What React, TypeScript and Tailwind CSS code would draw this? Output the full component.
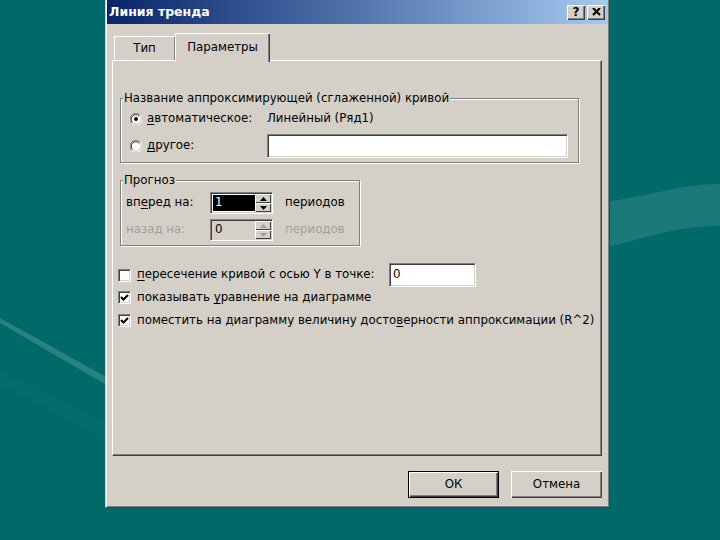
import React from 'react';

const font = 'font-["DejaVu_Sans",Tahoma,sans-serif]';

function Radio({ checked }: { checked?: boolean }) {
  return (
    <svg width="12" height="12" viewBox="0 0 12 12" className="shrink-0">
      <path d="M10.5 2.5 A6 6 0 0 0 1.5 10.5" fill="none" stroke="#808080" strokeWidth="1" />
      <path d="M1.5 10.5 A6 6 0 0 0 10.5 1.5" fill="none" stroke="#ffffff" strokeWidth="1" />
      <circle cx="6" cy="6" r="4.5" fill="#ffffff" stroke="none" />
      <path d="M9 3 A4.5 4.5 0 0 0 2.6 9.4" fill="none" stroke="#404040" strokeWidth="1" />
      {checked && <circle cx="6" cy="6" r="2" fill="#000" />}
    </svg>
  );
}

function Check({ checked }: { checked?: boolean }) {
  return (
    <span className="flex h-[13px] w-[13px] shrink-0 items-center justify-center border border-t-[#808080] border-l-[#808080] border-b-white border-r-white bg-white shadow-[inset_1px_1px_0_#404040,inset_-1px_-1px_0_#d4d0c8]">
      {checked && (
        <svg width="9" height="9" viewBox="0 0 9 9">
          <path d="M1 4 L3.5 6.5 L8 2" fill="none" stroke="#000" strokeWidth="2" />
        </svg>
      )}
    </span>
  );
}

function Spin({ value, disabled }: { value: string; disabled?: boolean }) {
  const tri = disabled ? '#a0a0a0' : '#000';
  return (
    <div
      className={`flex h-[22px] w-[63px] border border-t-[#808080] border-l-[#808080] border-b-white border-r-white shadow-[inset_1px_1px_0_#404040,inset_-1px_-1px_0_#d4d0c8] ${
        disabled ? 'bg-[#d4d0c8]' : 'bg-white'
      }`}
    >
      <div className="flex flex-1 items-center py-[2px] pl-[2px]">
        {disabled ? (
          <span className="pl-[2px] text-black">{value}</span>
        ) : (
          <span className="flex h-full w-full items-center bg-black pl-[2px] text-white">{value}</span>
        )}
      </div>
      <div className="flex w-[17px] flex-col py-[1px] pr-[1px]">
        <div className="flex flex-1 items-center justify-center bg-[#d4d0c8] shadow-[inset_1px_1px_0_#fff,inset_-1px_-1px_0_#404040]">
          <svg width="7" height="4" viewBox="0 0 7 4">
            <path d="M3.5 0 L7 4 L0 4 Z" fill={tri} />
          </svg>
        </div>
        <div className="flex flex-1 items-center justify-center bg-[#d4d0c8] shadow-[inset_1px_1px_0_#fff,inset_-1px_-1px_0_#404040]">
          <svg width="7" height="4" viewBox="0 0 7 4">
            <path d="M0 0 L7 0 L3.5 4 Z" fill={tri} />
          </svg>
        </div>
      </div>
    </div>
  );
}

function Button({ label, primary }: { label: string; primary?: boolean }) {
  return (
    <button
      className={`flex h-[27px] w-[91px] items-center justify-center bg-[#d4d0c8] text-black ${
        primary
          ? 'border border-black shadow-[inset_1px_1px_0_#fff,inset_-1px_-1px_0_#404040,inset_-2px_-2px_0_#808080]'
          : 'shadow-[inset_1px_1px_0_#fff,inset_-1px_-1px_0_#404040,inset_-2px_-2px_0_#808080]'
      }`}
    >
      {label}
    </button>
  );
}

function TitleButton({ children }: { children: React.ReactNode }) {
  return (
    <span className="flex h-[15px] w-[18px] items-center justify-center bg-[#d4d0c8] text-[12px] font-bold leading-none text-black shadow-[inset_1px_1px_0_#fff,inset_-1px_-1px_0_#404040,inset_-2px_-2px_0_#808080]">
      {children}
    </span>
  );
}

export default function App() {
  return (
    <div className={`relative h-[540px] w-[720px] overflow-hidden whitespace-nowrap bg-[#006a6a] text-[11.8px] ${font}`}>
      {/* desktop waves */}
      <svg className="absolute inset-0" width="720" height="540" viewBox="0 0 720 540">
        <path d="M0 318 L110 379 L110 387 L0 323 Z" fill="#3a8c8a" opacity="0.7" />
        <path d="M0 372 L110 424 L110 440 L0 384 Z" fill="#0b7271" opacity="0.4" />
        <path d="M605 202 C650 196 680 184 720 184 L720 226 C680 226 650 236 605 248 Z" fill="#1b7a78" />
      </svg>

      {/* dialog window */}
      <div className="relative ml-[105px] flex h-[508px] w-[505px] flex-col border-l border-r border-b border-l-[#d4d0c8] border-r-[#404040] border-b-[#404040] bg-[#d4d0c8] shadow-[inset_1px_0_0_#fff,inset_-1px_-1px_0_#808080]">
        {/* title bar */}
        <div className="mx-[1px] flex h-[24px] items-center justify-between bg-gradient-to-r from-[#0a246a] to-[#a6caf0] pl-[2px] pr-[3px]">
          <span className="text-[12.5px] font-bold text-white">Линия тренда</span>
          <div className="flex gap-[2px]">
            <TitleButton>?</TitleButton>
            <TitleButton>
              <svg width="9" height="8" viewBox="0 0 9 8">
                <path d="M1 0 L8 7 M8 0 L1 7" stroke="#000" strokeWidth="2" />
              </svg>
            </TitleButton>
          </div>
        </div>

        {/* tabs */}
        <div className="ml-[8px] mt-[9px] flex h-[27px] items-end">
          <div className="flex h-[24px] w-[61px] items-center justify-center pt-[2px] shadow-[inset_1px_1px_0_#fff,inset_-1px_0_0_#808080]">
            Тип
          </div>
          <div className="relative z-10 mb-[-2px] flex h-[29px] w-[95px] items-start justify-center bg-[#d4d0c8] pt-[6px] shadow-[inset_1px_1px_0_#fff,inset_-1px_0_0_#404040,inset_-2px_0_0_#808080]">
            Параметры
          </div>
        </div>

        {/* panel */}
        <div className="ml-[6px] mr-[7px] flex h-[396px] flex-col border border-t-white border-l-white border-b-[#404040] border-r-[#404040] shadow-[inset_-1px_-1px_0_#808080]">
          {/* group 1 */}
          <fieldset className="ml-[7px] mt-[29px] h-[73px] w-[459px] border border-[#808080] shadow-[inset_1px_1px_0_#fff,1px_1px_0_#fff]">
            <legend className="ml-[2px] bg-[#d4d0c8] px-[1px] leading-[16px]">
              Название аппроксимирующей (сглаженной) кривой
            </legend>
            <div className="ml-[9px] mt-[4px] flex items-center">
              <Radio checked />
              <span className="ml-[5px] w-[120px]">
                <u className="underline-offset-2">а</u>втоматическое:
              </span>
              <span>Линейный (Ряд1)</span>
            </div>
            <div className="ml-[9px] mt-[6px] flex items-center">
              <Radio />
              <span className="ml-[5px] w-[120px]">
                <u className="underline-offset-2">д</u>ругое:
              </span>
              <div className="h-[24px] w-[301px] border border-t-[#808080] border-l-[#808080] border-b-white border-r-white bg-white shadow-[inset_1px_1px_0_#404040,inset_-1px_-1px_0_#d4d0c8]" />
            </div>
          </fieldset>

          {/* group 2 */}
          <fieldset className="ml-[7px] mt-[9px] h-[74px] w-[240px] border border-[#808080] shadow-[inset_1px_1px_0_#fff,1px_1px_0_#fff]">
            <legend className="ml-[2px] bg-[#d4d0c8] px-[1px] leading-[16px]">Прогноз</legend>
            <div className="ml-[5px] mt-[4px] flex items-center">
              <span className="w-[84px]">
                вп<u className="underline-offset-2">е</u>ред на:
              </span>
              <Spin value="1" />
              <span className="ml-[12px]">периодов</span>
            </div>
            <div className="ml-[5px] mt-[5px] flex items-center text-[#a0a0a0]">
              <span className="w-[84px]">назад на:</span>
              <Spin value="0" disabled />
              <span className="ml-[12px]">периодов</span>
            </div>
          </fieldset>

          {/* checkboxes */}
          <div className="ml-[5px] mt-[17px] flex items-center">
            <Check />
            <span className="ml-[6px] w-[252px]">
              <u className="underline-offset-2">п</u>ересечение кривой с осью Y в точке:
            </span>
            <div className="flex h-[24px] w-[87px] items-center border border-t-[#808080] border-l-[#808080] border-b-white border-r-white bg-white pl-[3px] shadow-[inset_1px_1px_0_#404040,inset_-1px_-1px_0_#d4d0c8]">
              0
            </div>
          </div>
          <div className="ml-[5px] mt-[2px] flex items-center">
            <Check checked />
            <span className="ml-[6px]">
              показывать <u className="underline-offset-2">у</u>равнение на диаграмме
            </span>
          </div>
          <div className="ml-[5px] mt-[5px] flex items-center">
            <Check checked />
            <span className="ml-[6px]">
              поместить на диаграмму величину досто<u className="underline-offset-2">в</u>ерности аппроксимации (R^2)
            </span>
          </div>
        </div>

        {/* buttons */}
        <div className="mr-[7px] mt-[15px] flex justify-end gap-[12px]">
          <Button label="ОК" primary />
          <Button label="Отмена" />
        </div>
      </div>
    </div>
  );
}
